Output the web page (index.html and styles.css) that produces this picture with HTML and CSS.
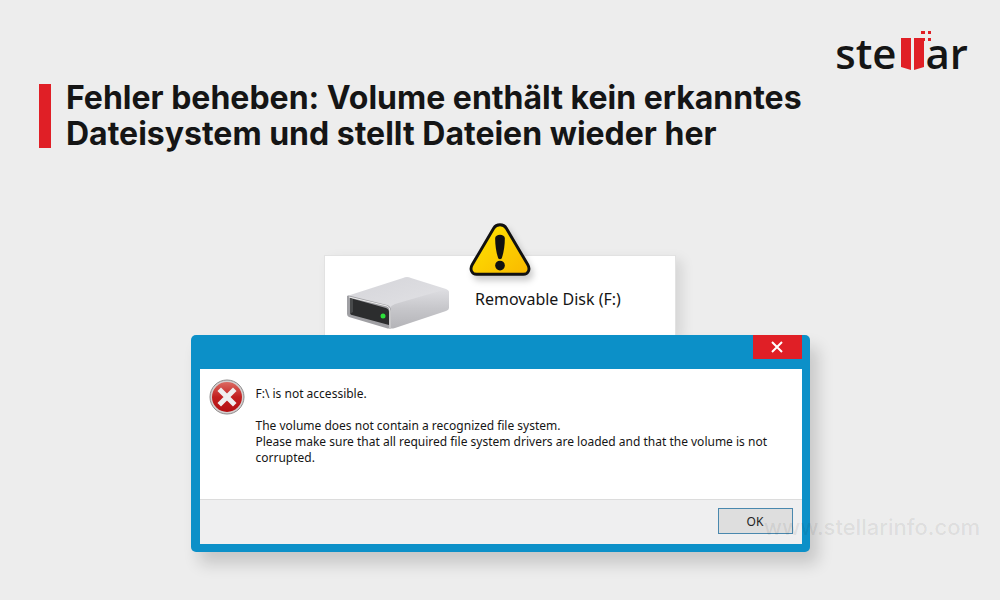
FILE: index.html
```
<!DOCTYPE html>
<html lang="de">
<head>
<meta charset="UTF-8">
<meta name="viewport" content="width=device-width, initial-scale=1.0">
<title>Fehler beheben: Volume enthält kein erkanntes Dateisystem</title>
<link rel="stylesheet" href="styles.css">
</head>
<body>
    <header>
        <div class="logo">
            <span>ste</span>
            <svg class="logo-mark" width="32" height="40" viewBox="0 0 32 40" aria-hidden="true">
                <path fill="#e01f26" d="M1 7h10v32L1 36zM14 7h10v29l-10 3z"/>
                <path fill="#e01f26" d="M21 0h4v3h-4zM28 0h3v3h-3zM21 7h4v3h-4zM28 7h3v3h-3z"/>
            </svg>
            <span>ar</span>
        </div>
        <h1><span>Fehler beheben: Volume enthält kein erkanntes<br>Dateisystem und stellt Dateien wieder her</span></h1>
    </header>

    <main>
        <section class="disk-card">
            <svg class="warning" width="68" height="64" viewBox="0 0 70 64" aria-hidden="true">
                <defs>
                    <linearGradient id="yellow" x1="0" y1="0" x2="1" y2="1">
                        <stop offset="0" stop-color="#ffe600"/>
                        <stop offset="1" stop-color="#f9b800"/>
                    </linearGradient>
                </defs>
                <path d="M35 6c-3 0-5 1-6.500 3.500L6.500 47C3.500 52 6 57 11 57h48c5 0 7.500-5 4.500-10L41.500 9.500C40 7 38 6 35 6z" fill="url(#yellow)" stroke="#111" stroke-width="3"/>
                <path d="M30 20c0-5 10-5 10 0 0 7-1 14-3 20-.5 2-3.500 2-4 0-2-6-3-13-3-20z" fill="#111"/>
                <circle cx="35" cy="48" r="5" fill="#111"/>
            </svg>
            <svg class="drive" width="104" height="54" viewBox="0 0 104 54" aria-hidden="true">
                <defs>
                    <linearGradient id="side" x1="0" y1="0" x2="0" y2="1">
                        <stop offset="0" stop-color="#dddde1"/>
                        <stop offset=".5" stop-color="#c6c6ca"/>
                        <stop offset="1" stop-color="#b4b4b8"/>
                    </linearGradient>
                    <linearGradient id="top" x1="0" y1="0" x2="1" y2="1">
                        <stop offset="0" stop-color="#d4d4d9"/>
                        <stop offset="1" stop-color="#e3e3e6"/>
                    </linearGradient>
                </defs>
                <path fill="url(#top)" d="M1 20 57 2q4-2 8 0l35 11q3 1 3 4L45 35z"/>
                <path fill="url(#side)" d="M43 34q1-4 6-6l48-14q6-1 6 3v15q0 2-3 3L49 52q-4 1-6 0z"/>
                <path fill="#a0a0a4" d="M1 20q1-1 4 0l36 9q4 1 4 6v17q-2 1-5 0L3 41q-2-1-2-3z"/>
                <path fill="#2c2d2e" d="M4 22l36 10q3 1 3 4v13L6 39q-2 0-2-3z"/>
                <path fill="#484a4b" d="M4 22l3 1v13l-3 2z"/>
                <path fill="none" stroke="#eee" d="M3 21l38 9q3 1 3 5v17"/>
                <circle cx="37" cy="40" r="2.500" fill="#2ee03c"/>
            </svg>
            <span class="disk-name">Removable Disk (F:)</span>
        </section>

        <section class="dialog" role="alertdialog" aria-labelledby="errorTitle">
            <div class="titlebar">
                <button type="button" class="btn-close" aria-label="Close">
                    <svg width="12" height="12" viewBox="0 0 12 12" aria-hidden="true">
                        <path d="M1 1l10 10M11 1 1 11" stroke="#fff" stroke-width="2"/>
                    </svg>
                </button>
            </div>
            <div class="dialog-body">
                <svg class="error-icon" width="36" height="36" viewBox="0 0 36 36" aria-hidden="true">
                    <defs>
                        <linearGradient id="red" x1="0" y1="0" x2="0" y2="1">
                            <stop offset="0" stop-color="#dc6a62"/>
                            <stop offset=".5" stop-color="#c2201f"/>
                            <stop offset="1" stop-color="#b40f12"/>
                        </linearGradient>
                    </defs>
                    <circle cx="18" cy="18" r="17" fill="#d5cfcf" stroke="#8d8a8a"/>
                    <circle cx="18" cy="18" r="15" fill="url(#red)"/>
                    <path d="M12 12l12 12M24 12 12 24" stroke="#efefef" stroke-width="5" stroke-linecap="square"/>
                </svg>
                <div class="message">
                    <p id="errorTitle">F:\ is not accessible.</p>
                    <p>The volume does not contain a recognized file system.<br>Please make sure that all required file system drivers are loaded and that the volume is not corrupted.</p>
                </div>
            </div>
            <div class="dialog-footer">
                <button type="button" class="btn-ok">OK</button>
            </div>
        </section>
    </main>

    <div class="watermark">www.stellarinfo.com</div>
</body>
</html>
```
FILE: styles.css
```
* {
    box-sizing: border-box;
}

body {
    position: relative;
    min-height: 600px;
    margin: 0;
    background-color: #ededed;
    color: #151515;
    font-family: "Noto Sans", "Open Sans", sans-serif;
}

header {
    padding: 31px 32px 0 39px;
}

/* Logo */
.logo {
    display: flex;
    justify-content: flex-end;
    align-items: flex-start;
    height: 49px;
    font-family: "Open Sans", sans-serif;
    font-size: 42px;
    font-weight: 600;
    line-height: 44px;
}

.logo-mark {
    margin: 0 -6px 0 3px;
}

h1 {
    display: flex;
    align-items: center;
    gap: 15px;
    margin: 0;
    font-family: Inter, sans-serif;
    font-size: 32px;
    font-weight: 700;
    line-height: 36px;
}

h1::before {
    content: "";
    flex: none;
    width: 12px;
    height: 64px;
    background-color: #e01f26;
}

main {
    display: flex;
    flex-direction: column;
    align-items: center;
    padding: 103px 16px 48px;
}

/* Disk card */
.disk-card {
    position: relative;
    display: flex;
    align-items: flex-start;
    gap: 25px;
    width: 100%;
    max-width: 352px;
    height: 80px;
    padding: 20px 21px 0;
    background-color: #fff;
    border: 1px solid #e2e2e2;
    border-bottom: none;
    box-shadow: 6px 5px 12px rgba(0, 0, 0, 0.1);
    white-space: nowrap;
}

.warning {
    position: absolute;
    top: -38px;
    left: 50%;
    transform: translateX(-50%);
    filter: drop-shadow(3px 5px 3px rgba(0, 0, 0, 0.2));
}

.disk-name {
    padding-top: 11px;
    font-size: 16px;
    line-height: 24px;
}

/* Error dialog */
.dialog {
    position: relative;
    width: 100%;
    max-width: 619px;
    padding: 0 8px 8px 9px;
    background-color: #0c90c8;
    border-radius: 5px;
    box-shadow: 8px 12px 16px rgba(0, 0, 0, 0.16);
}

.titlebar {
    display: flex;
    justify-content: flex-end;
    height: 34px;
}

.btn-close {
    display: flex;
    align-items: center;
    justify-content: center;
    width: 49px;
    height: 24px;
    padding: 0;
    background-color: #e01f26;
    border: none;
    cursor: pointer;
}

.dialog-body {
    display: flex;
    gap: 11px;
    min-height: 130px;
    padding: 10px 9px;
    background-color: #fff;
}

.error-icon {
    flex: none;
}

.message {
    padding-top: 7px;
    font-size: 12px;
    line-height: 16px;
}

.message p {
    margin: 0 0 16px;
}

.dialog-footer {
    display: flex;
    justify-content: flex-end;
    padding: 8px 9px 10px;
    background-color: #efeff0;
    border-top: 1px solid #dcdcdc;
}

.btn-ok {
    width: 75px;
    height: 26px;
    padding: 0;
    background-color: #dedede;
    border: 1px solid #4a88ae;
    color: #222;
    font-family: inherit;
    font-size: 12px;
    cursor: pointer;
}

.watermark {
    position: absolute;
    right: 20px;
    bottom: 60px;
    color: rgba(0, 0, 0, 0.08);
    font-family: Inter, sans-serif;
    font-size: 22px;
    font-weight: 500;
    line-height: 26px;
}
```
